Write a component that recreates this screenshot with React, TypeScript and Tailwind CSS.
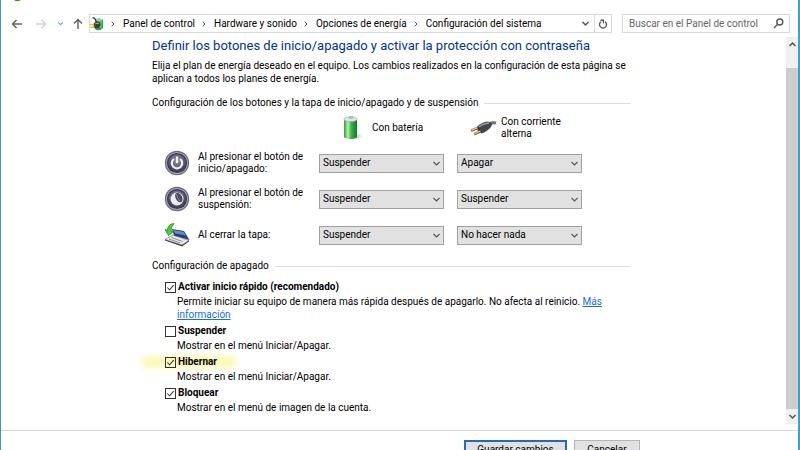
import { useState, type ReactNode } from "react";

const powerOptions = ["No hacer nada", "Suspender", "Hibernar", "Apagar"];

const crumbs = ["Panel de control", "Hardware y sonido", "Opciones de energía", "Configuración del sistema"];

function Stroke({ d, size, color = "#555", width = 1.5 }: { d: string; size: number; color?: string; width?: number }) {
  return (
    <svg width={size} height={size} viewBox="0 0 12 12" fill="none" stroke={color} strokeWidth={width} aria-hidden="true">
      <path d={d} />
    </svg>
  );
}

const DOWN = "M2 4 L6 8 L10 4";
const UP = "M2 8 L6 4 L10 8";
const RIGHT = "M4 2.5 L7.5 6 L4 9.5";

function PowerPlanIcon() {
  return (
    <svg width="14" height="14" viewBox="0 0 14 14" aria-hidden="true">
      <path d="M5 3 Q9 0 13 3 V11 Q9 15 5 12Z" fill="#2c9a3c" />
      <ellipse cx="9" cy="3" rx="3.6" ry="1.4" fill="#8fd69a" />
      <path d="M11 4 V11" stroke="#7fd68b" strokeWidth="1.2" />
      <path d="M3.500 7 Q5 4 9 5 Q12 7 9.500 10 Q7 12 4 11Z" fill="#3a3f3e" />
      <path d="M5 7 Q7 5.500 9 6.800" stroke="#a9aeac" strokeWidth="1" fill="none" />
      <path d="M2.500 1 Q5 0.500 5.500 3 L7 5.500" stroke="#3a3f3e" strokeWidth="1.3" fill="none" />
      <path d="M0 7.500 H4 M0.500 10.300 H4.500" stroke="#dcc026" strokeWidth="1.5" />
    </svg>
  );
}

function BatteryIcon() {
  return (
    <svg width="20" height="26" viewBox="0 0 20 26" aria-hidden="true">
      <defs>
        <linearGradient id="cell">
          <stop offset="0" stopColor="#2c9c35" />
          <stop offset="0.3" stopColor="#b9efb4" />
          <stop offset="0.55" stopColor="#3fb248" />
          <stop offset="1" stopColor="#137a22" />
        </linearGradient>
      </defs>
      <ellipse cx="13" cy="21" rx="6" ry="3" fill="#dddfdd" />
      <path d="M2 4 V22.500 Q8.500 26 15 22.500 V4Z" fill="url(#cell)" />
      <ellipse cx="8.500" cy="4.200" rx="6.500" ry="2.400" fill="#dce8df" stroke="#8fae95" strokeWidth="0.6" />
      <ellipse cx="9" cy="2.500" rx="2.500" ry="1.400" fill="#aeb6c4" />
    </svg>
  );
}

function PlugIcon() {
  return (
    <svg width="28" height="18" viewBox="0 0 28 18" aria-hidden="true">
      <path d="M19 5 Q23 3 27 4" stroke="#6c717b" strokeWidth="3" fill="none" />
      <path d="M8 8 Q12 3 19 2.500 L23.500 5 Q21 11 14 14 L9 13Z" fill="#43464f" />
      <path d="M10 8 Q14 4.500 20 4" stroke="#9a9fa9" strokeWidth="1.4" fill="none" />
      <path d="M8 8 L13 14" stroke="#26282e" strokeWidth="1.8" />
      <path d="M9 9 L2 11.800 M12 12.300 L5 15.300" stroke="#96703e" strokeWidth="2.6" />
      <path d="M8 9 L2.500 11.200 M11 12.200 L5.500 14.500" stroke="#ecd0a0" strokeWidth="1" />
    </svg>
  );
}

function RoundKey({ children }: { children: ReactNode }) {
  return (
    <svg width="26" height="26" viewBox="0 0 26 26" aria-hidden="true">
      <defs>
        <radialGradient id="face" cx="0.5" cy="0.35" r="0.7">
          <stop offset="0" stopColor="#9494a8" />
          <stop offset="0.6" stopColor="#5a5a72" />
          <stop offset="1" stopColor="#34344d" />
        </radialGradient>
      </defs>
      <circle cx="13" cy="13" r="12.2" fill="#6d6d7c" />
      <circle cx="13" cy="13" r="10.8" fill="#b4b4c2" />
      <circle cx="13" cy="13" r="10.1" fill="#3a3a52" />
      <circle cx="13" cy="13" r="8.800" fill="url(#face)" />
      {children}
    </svg>
  );
}

function PowerIcon() {
  return (
    <RoundKey>
      <path d="M9.800 9 A5.200 5.200 0 1 0 16.200 9" stroke="#f1f1f6" strokeWidth="2.2" fill="none" />
      <path d="M13 6.500 V13" stroke="#f1f1f6" strokeWidth="2.2" />
    </RoundKey>
  );
}

function SleepIcon() {
  return (
    <RoundKey>
      <circle cx="13" cy="13" r="6.500" fill="#ececf2" />
      <ellipse cx="14.800" cy="11.500" rx="3.200" ry="5.200" fill="#4c4c64" transform="rotate(-28 14.800 11.500)" />
      <path d="M12.500 8 Q13 12 16 15" stroke="#85859a" strokeWidth="1" fill="none" />
    </RoundKey>
  );
}

function LidIcon() {
  return (
    <svg width="26" height="26" viewBox="0 0 26 26" aria-hidden="true">
      <path d="M1 17.500 L18 23 L25 18.500 L9 13Z" fill="#e6e7ea" stroke="#777c85" strokeWidth="0.7" />
      <path d="M1 17.500 V18.500 L18 24.500 L25 19.500 V18.500 L18 23Z" fill="#3e434d" />
      <path d="M5 17 L16 20.800 M7.500 15.500 L18.500 19.500" stroke="#8d9199" strokeWidth="1" />
      <path d="M8 7 L20 9 L25.500 18 L10 13.500Z" fill="#263f73" />
      <path d="M9 8 L19.500 9.800 L22 13.500 L11 11.500Z" fill="#6787bd" />
      <path d="M10 1.500 Q3.500 2 3.500 8.500 L1 7.500 L4.500 13.500 L9.500 9.500 L7 9 Q6.500 5 10 1.500Z" fill="#48d13d" stroke="#16891b" strokeWidth="0.8" />
    </svg>
  );
}

function Combo({ label, initial }: { label: string; initial: string }) {
  const [value, setValue] = useState(initial);
  return (
    <div className="relative w-[125px]">
      <select
        aria-label={label}
        value={value}
        onChange={(e) => setValue(e.target.value)}
        className="block h-[19px] w-full appearance-none border border-[#a0a0a0] bg-[#e1e1e1] pl-[3px] pr-4 text-[10px] leading-4"
      >
        {powerOptions.map((o) => (
          <option key={o}>{o}</option>
        ))}
      </select>
      <span className="pointer-events-none absolute inset-y-0 right-[3px] flex items-center">
        <Stroke d={DOWN} size={9} width={1.5} />
      </span>
    </div>
  );
}

function SectionTitle({ children }: { children: ReactNode }) {
  return (
    <div className="flex items-center gap-1.5">
      <h2 className="whitespace-nowrap">{children}</h2>
      <span className="h-px flex-1 bg-[#dcdcdc]" />
    </div>
  );
}

const rows = [
  { icon: <PowerIcon />, label: "Al presionar el botón de inicio/apagado:", battery: "Suspender", plugged: "Apagar" },
  { icon: <SleepIcon />, label: "Al presionar el botón de suspensión:", battery: "Suspender", plugged: "Suspender" },
  { icon: <LidIcon />, label: "Al cerrar la tapa:", battery: "Suspender", plugged: "No hacer nada" },
];

function Check({
  id,
  label,
  on = false,
  marked = false,
  children,
}: {
  id: string;
  label: string;
  on?: boolean;
  marked?: boolean;
  children: ReactNode;
}) {
  const [checked, setChecked] = useState(on);
  return (
    <div>
      <div className="relative flex h-4 items-center gap-[2px]">
        {marked && <span className="absolute -left-6 -z-10 h-3 w-24 rounded-full bg-[#fbf9b4] blur-[3px]" />}
        <span className="relative flex">
          <input
            id={id}
            type="checkbox"
            checked={checked}
            onChange={(e) => setChecked(e.target.checked)}
            className="size-[11px] appearance-none border border-[#333]"
          />
          {checked && (
            <span className="pointer-events-none absolute inset-0">
              <Stroke d="M2.500 6 L5 8.500 L9.500 3.500" size={11} color="#333" width={1.1} />
            </span>
          )}
        </span>
        <label htmlFor={id} className="font-bold">{label}</label>
      </div>
      <p className="pl-3 leading-[13px]">{children}</p>
    </div>
  );
}

export default function App() {
  return (
    <div className="isolate flex h-screen flex-col overflow-hidden border-l border-r-2 border-l-[#4d8fc8] border-r-[#3fa0cc] bg-white font-['Roboto','Open_Sans',sans-serif] text-[10px] leading-3 text-black">
      <header className="-mt-[18px] flex h-[26px] items-center gap-1.5 pl-2 pr-3.5">
        <PowerPlanIcon />
        <h1 className="text-[11px] leading-4">Configuración del sistema</h1>
        <div className="ml-auto flex gap-8">
          <button aria-label="Minimizar"><Stroke d="M1 6 H11" size={10} width={1} color="#777" /></button>
          <button aria-label="Maximizar"><Stroke d="M1 1 H11 V11 H1Z" size={10} width={1} color="#777" /></button>
          <button aria-label="Cerrar"><Stroke d="M1 1 L11 11 M11 1 L1 11" size={10} width={1} color="#777" /></button>
        </div>
      </header>

      <nav className="mt-1.5 flex h-[19px] items-center">
        <div className="flex w-[88px] items-center pl-2.5">
          <button aria-label="Atrás"><Stroke d="M11 6 H1.500 M5.500 2 L1.500 6 L5.500 10" size={12} color="#666" /></button>
          <button aria-label="Adelante" className="ml-3"><Stroke d="M1 6 H10.500 M6.500 2 L10.500 6 L6.500 10" size={12} color="#d4d4d4" /></button>
          <button aria-label="Recientes" className="ml-2.5"><Stroke d={DOWN} size={7} color="#6fa3c8" width={2} /></button>
          <button aria-label="Subir" className="ml-2"><Stroke d="M6 11 V1.500 M2 5.500 L6 1.500 L10 5.500" size={12} color="#666" /></button>
        </div>
        <div className="flex h-full flex-1 items-center border border-[#d9d9d9]">
          <PowerPlanIcon />
          {crumbs.map((c) => (
            <span key={c} className="flex items-center whitespace-nowrap">
              <span className="pl-[5px] pr-1.5"><Stroke d={RIGHT} size={8} /></span>
              <a href="#">{c}</a>
            </span>
          ))}
          <button aria-label="Historial" className="ml-auto px-1"><Stroke d={DOWN} size={9} width={2} /></button>
          <button aria-label="Actualizar" className="flex h-full items-center border-l border-[#d9d9d9] px-[3px]">
            <Stroke d="M3.500 3.200 A4.200 4.200 0 1 0 8.500 3.200 M3 1.500 H6.500 V5" size={10} width={1.6} />
          </button>
        </div>
        <div className="relative ml-2.5 mr-2 h-full w-[168px]">
          <input
            aria-label="Buscar"
            placeholder="Buscar en el Panel de control"
            className="h-full w-full border border-[#d9d9d9] pl-1.5 placeholder:text-[#666]"
          />
          <span className="pointer-events-none absolute inset-y-0 right-1.5 flex items-center">
            <svg width="11" height="11" viewBox="0 0 11 11" fill="none" stroke="#555" strokeWidth="1.4" aria-hidden="true">
              <circle cx="6.800" cy="4" r="3" />
              <path d="M4.600 6.200 L1 10" />
            </svg>
          </span>
        </div>
      </nav>

      <div className="mt-1 flex min-h-0 flex-1">
        <main className="min-w-0 flex-1 pl-[151px]">
          <div className="w-[479px]">
            <h2 className="whitespace-nowrap text-[13px] leading-[18px] text-[#003399]">
              Definir los botones de inicio/apagado y activar la protección con contraseña
            </h2>
            <p className="mt-1 leading-[13px]">
              Elija el plan de energía deseado en el equipo. Los cambios realizados en la configuración de esta página se aplican a todos los planes de energía.
            </p>

            <section className="mt-3">
              <SectionTitle>Configuración de los botones y la tapa de inicio/apagado y de suspensión</SectionTitle>
              <div className="mt-[5px] flex h-7 items-center">
                <div className="flex w-[305px] items-center gap-2.5 pl-[190px]">
                  <BatteryIcon />
                  <span className="whitespace-nowrap">Con batería</span>
                </div>
                <div className="flex items-center gap-1 pl-3">
                  <PlugIcon />
                  <span className="w-20">Con corriente alterna</span>
                </div>
              </div>
              <div className="mt-[3px]">
                {rows.map((r) => (
                  <div key={r.label} className="flex h-9 items-center pl-3">
                    {r.icon}
                    <span className="ml-2 w-[121px] pr-1">{r.label}</span>
                    <div className="flex gap-[13px]">
                      <Combo label={`${r.label} Con batería`} initial={r.battery} />
                      <Combo label={`${r.label} Con corriente alterna`} initial={r.plugged} />
                    </div>
                  </div>
                ))}
              </div>
            </section>

            <section className="mt-[7px]">
              <SectionTitle>Configuración de apagado</SectionTitle>
              <div className="mt-[7px] flex flex-col gap-0.5 pl-[13px]">
                <Check id="fast" label="Activar inicio rápido (recomendado)" on>
                  Permite iniciar su equipo de manera más rápida después de apagarlo. No afecta al reinicio.{" "}
                  <a href="#" className="text-[#1a6fc9] underline">Más<br />información</a>
                </Check>
                <Check id="sleep" label="Suspender">Mostrar en el menú Iniciar/Apagar.</Check>
                <Check id="hibernate" label="Hibernar" on marked>Mostrar en el menú Iniciar/Apagar.</Check>
                <Check id="lock" label="Bloquear" on>Mostrar en el menú de imagen de la cuenta.</Check>
              </div>
            </section>
          </div>
        </main>
        <div className="mb-1.5 flex w-3 flex-col bg-[#f0f0f0]">
          <button aria-label="Desplazar arriba" className="flex h-[15px] items-center justify-center"><Stroke d={UP} size={9} width={2} /></button>
          <span className="mt-4 flex-1 bg-[#cdcdcd]" />
          <button aria-label="Desplazar abajo" className="flex h-[15px] items-center justify-center"><Stroke d={DOWN} size={9} width={2} /></button>
        </div>
      </div>

      <footer className="-mb-3 flex h-8 items-start justify-end gap-[7px] border-t border-[#d9d9d9] pr-[158px] pt-[9px]">
        <button className="h-[19px] w-[103px] shrink-0 border-2 border-[#2468c4] bg-[#e1e1e1]">Guardar cambios</button>
        <button className="h-[19px] w-[66px] shrink-0 border border-[#b5b5b5] bg-[#e1e1e1]">Cancelar</button>
      </footer>
    </div>
  );
}
